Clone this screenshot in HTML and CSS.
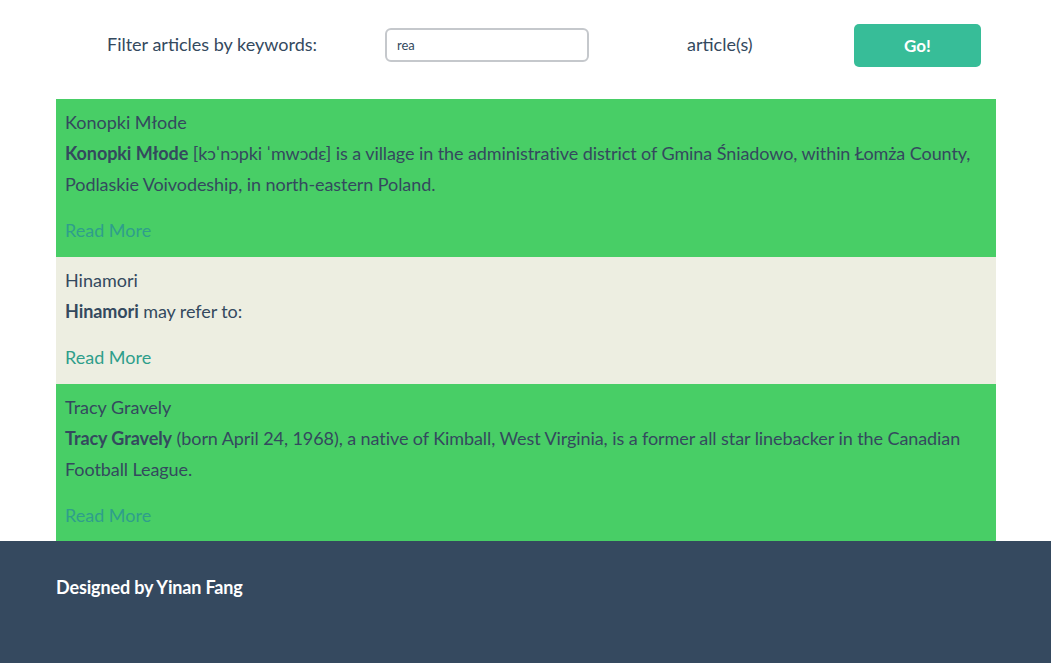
FILE: index.html
```html
<!DOCTYPE html>
<html lang="en">
<head>
<meta charset="utf-8">
<title>Wiki Viewer</title>
<link rel="stylesheet" href="styles.css">
</head>
<body>
<header class="search-bar">
  <label class="search-label" for="kw">Filter articles by keywords:</label>
  <input class="search-input" id="kw" type="text" value="rea">
  <span class="search-count">article(s)</span>
  <button class="search-btn" type="button">Go!</button>
</header>
<main class="articles">
  <article class="card card-green">
    <div class="card-title">Konopki Młode</div>
    <p class="card-text"><b>Konopki Młode</b> [kɔˈnɔpki ˈmwɔdɛ] is a village in the administrative district of Gmina Śniadowo, within Łomża County, Podlaskie Voivodeship, in north-eastern Poland.</p>
    <a class="card-link" href="#">Read More</a>
  </article>
  <article class="card card-beige">
    <div class="card-title">Hinamori</div>
    <p class="card-text"><b>Hinamori</b> may refer to:</p>
    <a class="card-link" href="#">Read More</a>
  </article>
  <article class="card card-green">
    <div class="card-title">Tracy Gravely</div>
    <p class="card-text"><b>Tracy Gravely</b> (born April 24, 1968), a native of Kimball, West Virginia, is a former all star linebacker in the Canadian Football League.</p>
    <a class="card-link" href="#">Read More</a>
  </article>
</main>
<footer class="footer">
  <div class="footer-inner">Designed by Yinan Fang</div>
</footer>
</body>
</html>
```

FILE: styles.css
```css
* { box-sizing: border-box; }
html, body { margin: 0; padding: 0; }
body {
  font-family: Lato, "Open Sans", "DejaVu Sans", sans-serif;
  color: #34495e;
  background: #fff;
  height: 663px;
  display: flex;
  flex-direction: column;
}
.search-bar {
  flex: none;
  height: 99px;
  display: grid;
  grid-template-columns: 385px 302px 167px 127px;
  align-items: center;
  padding-bottom: 8px;
}
.search-label {
  grid-column: 1;
  padding-left: 107px;
  margin-bottom: 4px;
  font-size: 18px;
  white-space: nowrap;
}
.search-input {
  grid-column: 2;
  width: 204px;
  height: 34px;
  margin-bottom: 2px;
  border: 2px solid #c5c8cc;
  border-radius: 6px;
  padding: 0 10px;
  font-family: Lato, "Open Sans", sans-serif;
  font-size: 13px;
  color: #34495e;
  outline: none;
}
.search-count {
  grid-column: 3;
  margin-bottom: 3px;
  font-size: 18px;
}
.search-btn {
  grid-column: 4;
  height: 43px;
  border: none;
  border-radius: 5px;
  background: #37bd98;
  color: #fff;
  font-family: Lato, "Open Sans", sans-serif;
  font-size: 17px;
  font-weight: 700;
}
.articles {
  flex: none;
  width: 940px;
  margin: 0 56px;
}
.card {
  padding: 8px 9px 11px;
}
.card-green { background: #48ce66; }
.card-beige { background: #edeee1; }
.card-title {
  font-size: 18px;
  line-height: 31px;
}
.card-text {
  margin: 0 0 15px;
  font-size: 18px;
  line-height: 31px;
  letter-spacing: -0.08px;
}
.card-text b { font-weight: 700; }
.card-link {
  display: block;
  font-size: 18px;
  line-height: 31px;
  color: #2f9e8b;
  text-decoration: none;
}
.card:last-child { padding-bottom: 10px; }
.footer {
  flex: 1;
  background: #35495f;
  color: #fff;
  padding: 34px 56px 0;
}
.footer-inner {
  font-size: 18px;
  font-weight: 700;
  line-height: 24px;
  letter-spacing: -0.15px;
}
```
